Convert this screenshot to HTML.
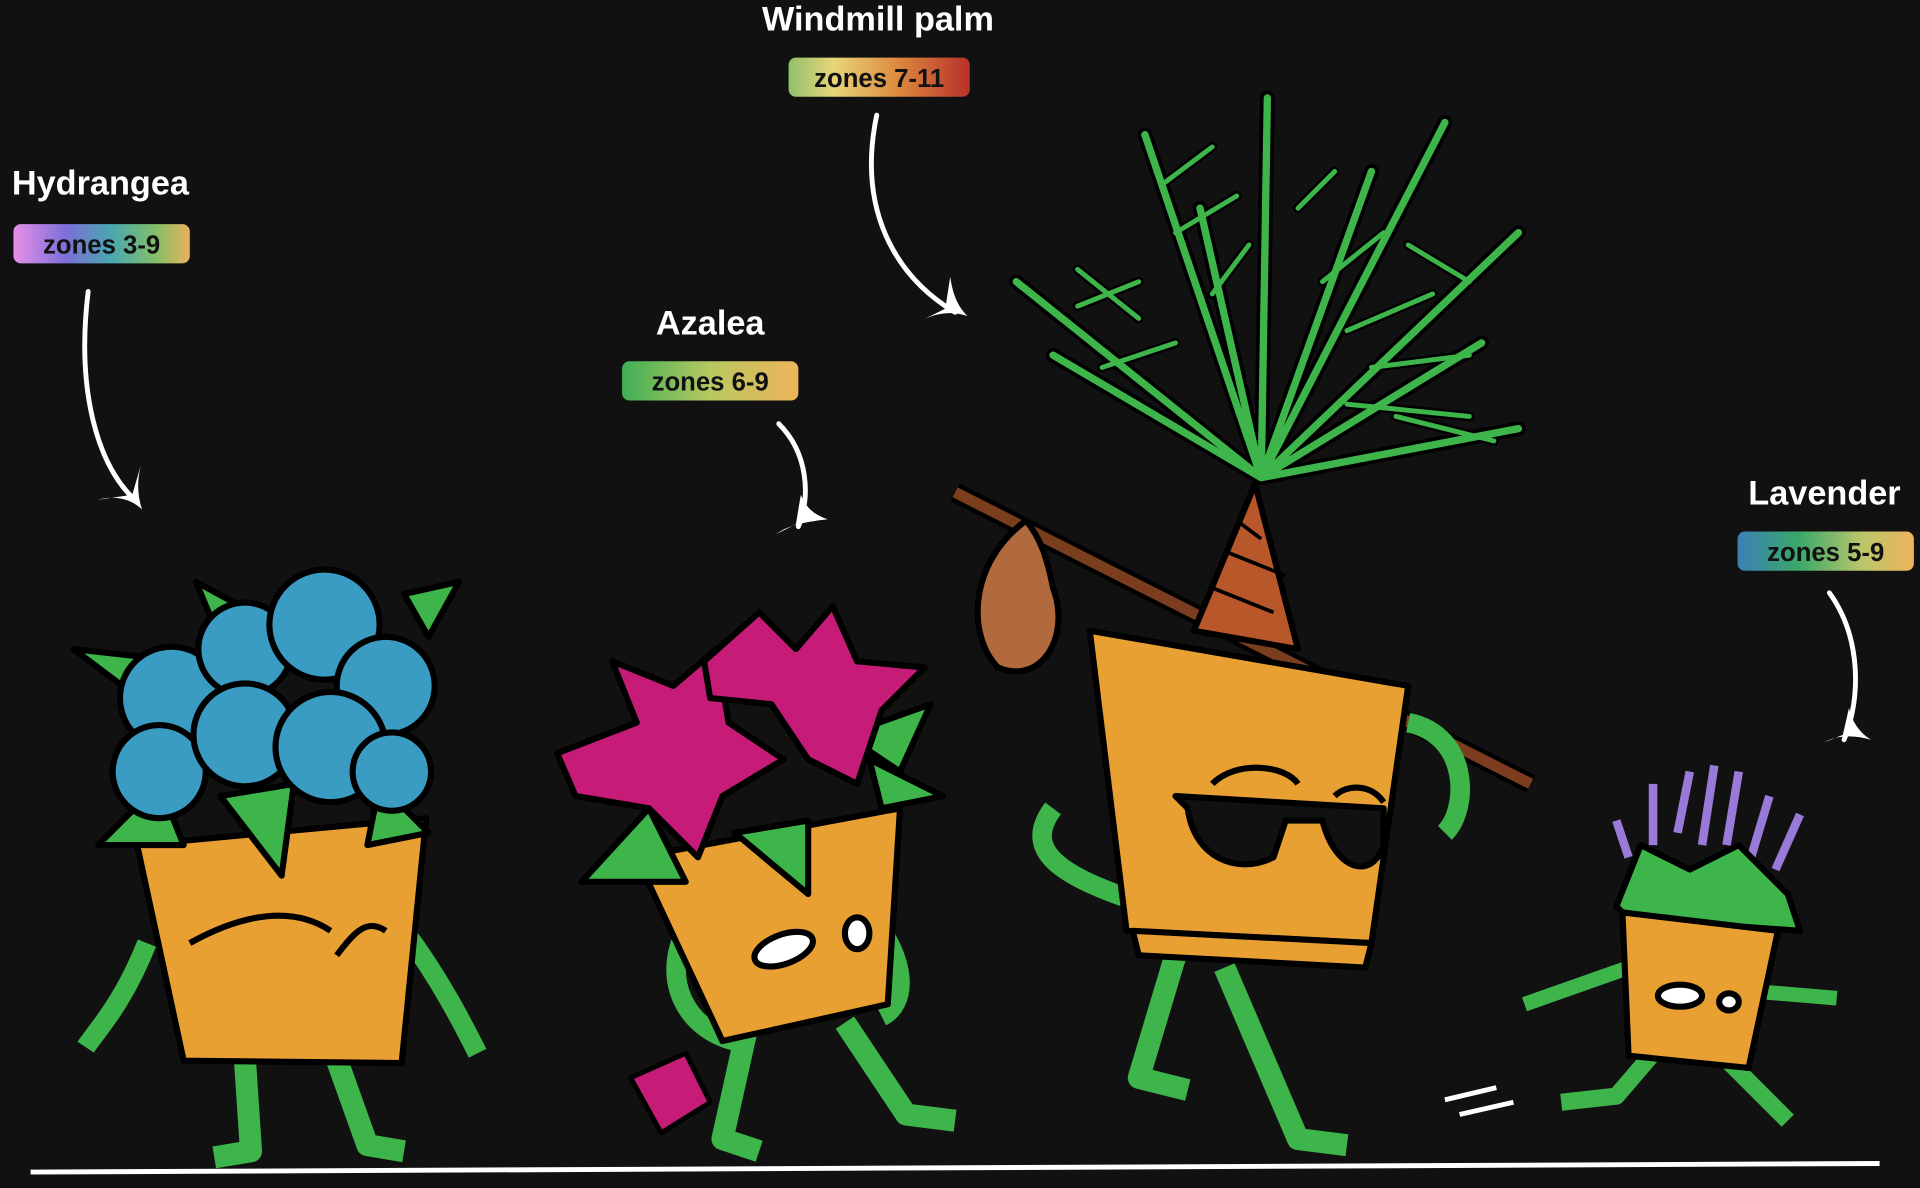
<!DOCTYPE html>
<html><head><meta charset="utf-8"><style>
html,body{margin:0;padding:0;background:#111;width:1920px;height:1188px;overflow:hidden}
svg{display:block}
text{font-family:"Liberation Sans",sans-serif;font-weight:bold}
</style></head><body>
<svg width="1920" height="1188" viewBox="0 0 1568 970" preserveAspectRatio="none" xmlns="http://www.w3.org/2000/svg">
<defs>
<linearGradient id="gH"><stop offset="0" stop-color="#e88fe8"/><stop offset=".3" stop-color="#7a6fd8"/><stop offset=".55" stop-color="#4aa6b0"/><stop offset=".8" stop-color="#7fbf6a"/><stop offset="1" stop-color="#e9b25a"/></linearGradient>
<linearGradient id="gA"><stop offset="0" stop-color="#3fae55"/><stop offset=".5" stop-color="#b7c860"/><stop offset="1" stop-color="#efb45a"/></linearGradient>
<linearGradient id="gW"><stop offset="0" stop-color="#8fc06a"/><stop offset=".25" stop-color="#e9d57a"/><stop offset=".6" stop-color="#dc8a3e"/><stop offset="1" stop-color="#b8302a"/></linearGradient>
<linearGradient id="gL"><stop offset="0" stop-color="#3b7fb5"/><stop offset=".35" stop-color="#3aa86a"/><stop offset=".7" stop-color="#b9c66a"/><stop offset="1" stop-color="#efb45a"/></linearGradient>
</defs>
<rect width="1568" height="970" fill="#111"/>

<g fill="#fff" font-size="28" text-anchor="middle">
<text x="82" y="159">Hydrangea</text>
<text x="580" y="273">Azalea</text>
<text x="717" y="25">Windmill palm</text>
<text x="1490" y="412">Lavender</text>
</g>
<rect x="11" y="183" width="144" height="32" rx="6" fill="url(#gH)"/>
<rect x="508" y="295" width="144" height="32" rx="6" fill="url(#gA)"/>
<rect x="644" y="47" width="148" height="32" rx="6" fill="url(#gW)"/>
<rect x="1419" y="434" width="144" height="32" rx="6" fill="url(#gL)"/>
<g fill="#111" font-size="21" text-anchor="middle">
<text x="83" y="207">zones 3-9</text>
<text x="580" y="319">zones 6-9</text>
<text x="718" y="71">zones 7-11</text>
<text x="1491" y="458">zones 5-9</text>
</g>

<g fill="none" stroke="#fff" stroke-width="4" stroke-linecap="round">
<path d="M72 238 C62 320 80 380 110 408"/>
<path d="M716 94 C700 170 730 225 780 255"/>
<path d="M636 346 C660 370 662 405 652 430"/>
<path d="M1494 484 C1520 520 1520 570 1506 604"/>
</g>
<g fill="#fff">
<path d="M80 408 C95 404 108 408 116 416 C112 404 112 392 115 380 L108 404 Z"/>
<path d="M752 262 C765 255 778 254 790 258 C782 250 778 240 776 226 L772 252 Z"/>
<path d="M634 436 C645 428 660 426 676 424 C664 420 658 414 654 404 L650 428 Z"/>
<path d="M1490 606 C1500 600 1515 600 1528 604 C1518 598 1512 588 1510 578 L1505 600 Z"/>
</g>

<path d="M25 957 L1535 950" stroke="#fff" stroke-width="4"/>

<!-- HYDRANGEA -->
<g stroke="#000" stroke-width="5" stroke-linejoin="round">
<path d="M120 770 C100 820 80 840 70 855 M330 760 C360 800 380 840 390 860" stroke="#3db54a" stroke-width="16" fill="none"/>
<path d="M200 865 L205 940 L175 945 M275 865 L300 935 L330 940" stroke="#3db54a" stroke-width="18" fill="none"/>
<path d="M112 690 L348 668 L328 868 L150 866 Z" fill="#e9a032"/>
<path d="M155 770 C200 745 240 740 270 760 M275 780 C290 760 300 750 315 760" fill="none" stroke-width="5"/>
<path d="M60 530 L150 540 L120 575 Z M160 475 L215 505 L185 535 Z M330 485 L375 475 L350 520 Z M80 690 L130 640 L150 690 Z M180 650 L240 640 L230 715 Z M310 640 L350 680 L300 690 Z" fill="#3db54a"/>
<g fill="#3a9cc2">
<circle cx="140" cy="570" r="42"/><circle cx="200" cy="530" r="38"/><circle cx="265" cy="510" r="45"/><circle cx="315" cy="560" r="40"/>
<circle cx="130" cy="630" r="38"/><circle cx="200" cy="600" r="42"/><circle cx="270" cy="610" r="45"/><circle cx="320" cy="630" r="32"/>
</g>
</g>

<!-- AZALEA -->
<g stroke="#000" stroke-width="5" stroke-linejoin="round">
<path d="M560 760 C540 800 560 840 600 850 M720 760 C740 790 740 820 720 830" stroke="#3db54a" stroke-width="16" fill="none"/>
<path d="M610 840 L590 930 L620 940 M690 835 L740 910 L780 915" stroke="#3db54a" stroke-width="18" fill="none"/>
<path d="M515 880 L560 860 L580 900 L540 925 Z" fill="#c61c78" stroke-width="4"/>
<path d="M520 700 L735 660 L725 820 L590 850 Z" fill="#e9a032"/>
<ellipse cx="640" cy="775" rx="25" ry="12" fill="#fff" transform="rotate(-20 640 775)"/>
<ellipse cx="700" cy="762" rx="10" ry="13" fill="#fff"/>
<path d="M475 720 L530 660 L560 720 Z M600 680 L660 670 L660 730 Z M690 600 L760 575 L735 630 Z M710 620 L770 650 L720 660 Z" fill="#3db54a"/>
<g fill="#c61c78">
<path d="M455 615 L520 590 L500 540 L550 560 L585 530 L595 590 L640 620 L590 650 L570 700 L530 660 L470 650 Z"/>
<path d="M575 540 L620 500 L650 530 L680 495 L700 540 L755 545 L720 580 L700 640 L660 620 L630 575 L580 570 Z"/>
</g>
</g>

<!-- PALM -->
<g stroke="#000" stroke-width="5" stroke-linejoin="round">
<path d="M780 402 L1250 640" stroke="#000" stroke-width="16"/>
<path d="M780 402 L1250 640" stroke="#7a3d1e" stroke-width="9"/>
<path d="M838 425 C790 460 790 520 815 545 C850 560 875 520 860 480 C855 455 850 440 838 425 Z" fill="#b06a3e"/>
<path d="M975 515 L1025 395 L1060 530 Z" fill="#b8572a"/>
<path d="M990 480 L1040 500 M1000 450 L1050 470 M1010 425 L1030 440" fill="none" stroke-width="3"/>
<g fill="none" stroke="#000" stroke-width="12" stroke-linecap="round">
<path id="fr" d="M1030 390 L935 110 M1030 390 L1035 80 M1030 390 L1120 140 M1030 390 L1180 100 M1030 390 L1240 190 M1030 390 L1240 350 M1030 390 L830 230 M1030 390 L860 290 M1030 390 L1210 280 M1030 390 L980 170"/>
</g>
<g fill="none" stroke="#000" stroke-width="8" stroke-linecap="round">
<path d="M950 150 L990 120 M960 190 L1010 160 M990 240 L1020 200 M1060 170 L1090 140 M1080 230 L1130 190 M1100 270 L1170 240 M1120 300 L1200 290 M1100 330 L1200 340 M880 250 L930 230 M900 300 L960 280 M880 220 L930 260 M1150 200 L1200 230 M1140 340 L1220 360"/>
</g>
<g fill="none" stroke="#3db54a" stroke-width="6" stroke-linecap="round">
<path d="M1030 390 L935 110 M1030 390 L1035 80 M1030 390 L1120 140 M1030 390 L1180 100 M1030 390 L1240 190 M1030 390 L1240 350 M1030 390 L830 230 M1030 390 L860 290 M1030 390 L1210 280 M1030 390 L980 170"/>
<path d="M950 150 L990 120 M960 190 L1010 160 M990 240 L1020 200 M1060 170 L1090 140 M1080 230 L1130 190 M1100 270 L1170 240 M1120 300 L1200 290 M1100 330 L1200 340 M880 250 L930 230 M900 300 L960 280 M880 220 L930 260 M1150 200 L1200 230 M1140 340 L1220 360" stroke-width="4"/>
</g>
<path d="M860 660 C830 700 880 720 940 740 M1150 590 C1200 600 1200 660 1180 680" stroke="#3db54a" stroke-width="16" fill="none"/>
<path d="M960 780 L930 880 L970 890 M1000 790 L1060 930 L1100 935" stroke="#3db54a" stroke-width="18" fill="none"/>
<path d="M890 515 L1150 560 L1120 770 L920 760 Z" fill="#e9a032"/>
<path d="M925 760 L1120 770 L1115 790 L930 780 Z" fill="#e9a032"/>
<path d="M970 660 C975 700 1010 715 1040 700 L1050 670 L1080 670 C1090 710 1120 720 1130 690 L1130 660 L960 650 Z" fill="#111"/>
<path d="M990 640 C1010 620 1050 625 1060 640 M1090 650 C1100 640 1120 640 1130 655" fill="none"/>
</g>

<!-- LAVENDER -->
<g stroke="#000" stroke-width="5" stroke-linejoin="round">
<path d="M1330 790 L1245 820 M1440 810 L1500 815" stroke="#3db54a" stroke-width="12" fill="none"/>
<path d="M1350 860 L1320 895 L1275 900 M1410 865 L1450 905 L1460 915" stroke="#3db54a" stroke-width="14" fill="none"/>
<g stroke="#9a7ad8" stroke-width="7">
<path d="M1330 700 L1320 670 M1350 690 L1350 640 M1370 680 L1380 630 M1390 690 L1400 625 M1410 690 L1420 630 M1430 700 L1445 650 M1450 710 L1470 665"/>
</g>
<path d="M1320 740 L1340 690 L1380 710 L1420 690 L1460 730 L1470 760 L1330 750 Z" fill="#3db54a"/>
<path d="M1325 745 L1452 760 L1428 872 L1330 862 Z" fill="#e9a032"/>
<ellipse cx="1372" cy="813" rx="18" ry="9" fill="#fff"/>
<ellipse cx="1412" cy="818" rx="8" ry="7" fill="#fff"/>
</g>
<path d="M1180 898 L1222 888 M1192 910 L1236 900" stroke="#fff" stroke-width="4"/>
</svg>
</body></html>
